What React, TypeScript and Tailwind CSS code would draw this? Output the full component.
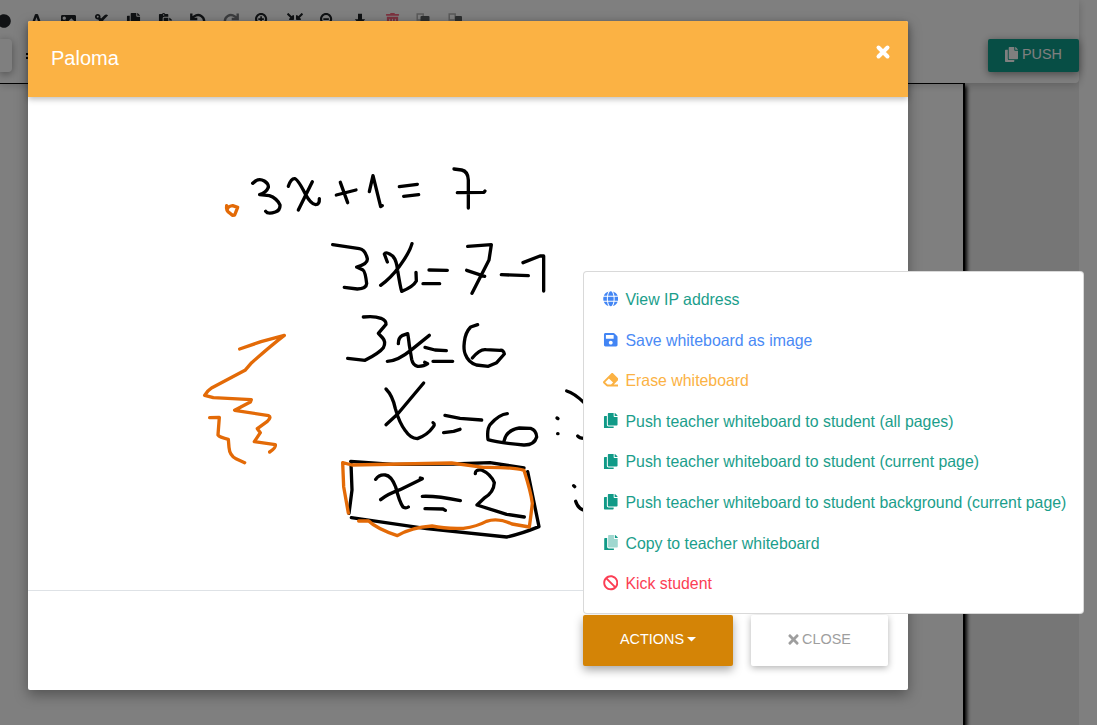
import type { ReactNode } from 'react';
import {
  FaBan,
  FaCircle,
  FaCompressArrowsAlt,
  FaCopy,
  FaCut,
  FaEraser,
  FaFont,
  FaGlobe,
  FaImage,
  FaPaste,
  FaSave,
  FaSearchMinus,
  FaSearchPlus,
  FaTimes,
  FaTrashAlt,
} from 'react-icons/fa';

const UndoIcon = () => (
  <svg viewBox="0 0 16 16" className="h-4 w-4" fill="none" stroke="currentColor" strokeWidth="2.400">
    <path d="M1.300 .5v5.500h6M1.800 5.600C4 2.500 8 1 11.200 3c3.800 2.400 4 7.800.4 10.300-2.400 1.700-5.400 1.500-7.600-.3" />
  </svg>
);

const ArrowIcon = () => (
  <svg viewBox="0 0 16 16" className="h-4 w-4" fill="currentColor">
    <path d="M6 .7h4v5.500h3.200L8 12 2.800 6.200H6z" />
  </svg>
);

const LayersIcon = ({ small = false }: { small?: boolean }) => (
  <svg viewBox="0 0 16 16" className="mr-[2px] h-4 w-4" fill="none">
    <path d="M1.200 1h6v6h-6z" stroke="#b5b5b5" strokeWidth="1.500" />
    {small ? (
      <rect x="7" y="3" width="7" height="8" rx="1" fill="#5d6062" />
    ) : (
      <rect x="4.500" y="3" width="9" height="8" rx="1" fill="#5d6062" />
    )}
  </svg>
);

const Duo = () => (
  <svg viewBox="0 0 448 512" className="h-[15.500px] w-[14px]" fill="currentColor">
    <path d="M320 448v40c0 13.255-10.745 24-24 24H24c-13.255 0-24-10.745-24-24V120c0-13.255 10.745-24 24-24h72v296c0 30.879 25.121 56 56 56h168z" />
    <path
      opacity=".4"
      d="M320 104V0H152c-13.255 0-24 10.745-24 24v368c0 13.255 10.745 24 24 24h272c13.255 0 24-10.745 24-24V128H344c-13.200 0-24-10.800-24-24z"
    />
    <path d="M440.971 72.971L375.029 7.029A24 24 0 0 0 358.059 0H352v96h96v-6.059a24 24 0 0 0-7.029-16.970z" />
  </svg>
);

const tools: ReactNode[] = [
  <FaCircle size={14} />,
  <FaFont size={15} />,
  <FaImage size={15} />,
  <FaCut size={15} />,
  <FaCopy size={15} />,
  <FaPaste size={15} />,
  <UndoIcon />,
  <span className="-scale-x-100 opacity-60">
    <UndoIcon />
  </span>,
  <FaSearchPlus size={15} />,
  <FaCompressArrowsAlt size={16} />,
  <FaSearchMinus size={15} />,
  <ArrowIcon />,
  <span className="text-[#f93154] opacity-75">
    <FaTrashAlt size={15} />
  </span>,
  <LayersIcon />,
  <LayersIcon small />,
];

const menu: { label: string; icon: ReactNode; text: string; iconColor: string }[] = [
  { label: 'View IP address', icon: <FaGlobe />, text: 'text-[#1b9e8b]', iconColor: 'text-[#4285f4]' },
  { label: 'Save whiteboard as image', icon: <FaSave />, text: 'text-[#4a8af5]', iconColor: 'text-[#4285f4]' },
  { label: 'Erase whiteboard', icon: <FaEraser />, text: 'text-[#fbb244]', iconColor: 'text-[#fbb244]' },
  { label: 'Push teacher whiteboard to student (all pages)', icon: <FaCopy />, text: 'text-[#1b9e8b]', iconColor: 'text-[#109a87]' },
  { label: 'Push teacher whiteboard to student (current page)', icon: <FaCopy />, text: 'text-[#1b9e8b]', iconColor: 'text-[#109a87]' },
  { label: 'Push teacher whiteboard to student background (current page)', icon: <FaCopy />, text: 'text-[#1b9e8b]', iconColor: 'text-[#109a87]' },
  { label: 'Copy to teacher whiteboard', icon: <Duo />, text: 'text-[#1b9e8b]', iconColor: 'text-[#109a87]' },
  { label: 'Kick student', icon: <FaBan />, text: 'text-[#fb3e54]', iconColor: 'text-[#fb3e54]' },
];

const Drawing = () => (
  <svg viewBox="28 97 880 493" className="block h-[493px] w-[880px]" fill="none" strokeLinecap="round" strokeLinejoin="round">
    <g stroke="#000" strokeWidth="10">
      <g transform="translate(190 150) scale(.33333)">
        <path d="M188 100L198 92Q210 85 223 93Q236 101 235 112Q229 127 209 134L238 137Q260 144 270 165Q271 181 256 186Q234 194 227 184" />
        <path d="M295 109Q303 85 314 86Q323 87 346 132Q362 162 377 164Q389 164 388 146M367 95L325 180" />
        <path d="M451 97L473 158M439 135L498 120M538 125L549 77L572 170L577 167" />
        <path d="M428 284L508 296Q526 299 532 326Q534 342 500 351L519 360Q526 365 530 401Q529 416 502 417L463 412" />
      </g>
      <g transform="translate(380 150) scale(.33333)">
        <path d="M58 110L112 103M71 139L116 134M222 57L245 60Q264 64 265 90L265 174M232 128L312 127L315 123" />
        <path d="M22 336L13 312Q18 303 38 318Q50 331 53 362Q61 411 65 424Q99 411 109 393L108 367M96 281Q89 307 59 348Q33 384 2 406" />
        <path d="M147 360L202 361M129 401L179 401M263 289L334 284L327 330L276 430M260 361L314 379M364 374L445 377M429 338L480 318L491 318L491 423" />
      </g>
      <g transform="translate(330 300) scale(.33333)">
        <path d="M100 51Q133 47 153 55Q169 62 168 73L145 100L158 114Q169 126 160 143Q149 158 105 181L53 175" />
        <path d="M205 131Q205 113 216 107L233 101Q235 110 238 136L245 178Q249 196 263 199Q281 200 293 191L284 187M298 106L245 149Q202 184 172 184" />
        <path d="M285 142L315 150L349 152M309 184L368 184M443 74L422 81Q406 97 403 126Q400 150 406 163Q415 187 439 195L475 199L500 188L523 162Q521 149 510 151L468 149Q450 146 427 174" />
        <path d="M168 267Q188 287 196 326Q208 369 226 392Q241 415 262 416Q293 404 306 385Q318 373 309 368M281 249L203 342L168 374" />
        <path d="M345 346L390 355L455 360M341 398L371 394L390 388M532 341Q508 343 481 373Q470 387 474 419Q502 428 581 435Q613 436 620 411Q619 390 602 385L568 384Q528 390 522 424" />
        <path d="M681 354L684 356M683 401L684 401M710 273Q732 279 762 308L790 338M743 408Q749 416 765 415" />
      </g>
      <g transform="translate(330 440) scale(.33333)">
        <path d="M62 64L190 73L370 72L480 68L582 84M63 70L66 150L57 220M64 233L290 266L530 291Q573 282 627 260L593 95" />
        <path d="M137 118Q147 103 166 105Q184 107 197 141Q208 185 219 201Q228 206 235 201M152 179Q173 162 210 149L277 116L271 114" />
        <path d="M277 169Q318 167 391 182M285 206L339 207L346 211M436 101Q435 88 455 90Q482 102 493 128Q491 158 463 174L441 195L530 223L583 231" />
        <path d="M731 137L734 140M737 184Q745 210 770 212" />
      </g>
    </g>
    <g stroke="#e36a07" strokeWidth="10">
      <path transform="translate(190 150) scale(.33333)" d="M110 167Q107 183 120 190L127 196L134 195L143 172L128 167Q113 169 112 178" />
      <path
        transform="translate(190 300) scale(.33333)"
        d="M149 147L213 125L283 106Q245 135 185 188L165 211L66 263Q52 272 44 286L70 293L184 299L181 306L134 331L236 347Q245 351 232 364L202 386L211 398L193 425L256 434Q258 444 239 456M59 353L88 352L84 405Q89 412 115 418L117 442Q119 467 138 476L164 488"
      />
      <path
        transform="translate(330 440) scale(.33333)"
        d="M86 243L116 243Q140 266 202 287Q243 262 306 258Q347 267 400 265Q442 259 469 244Q504 232 546 252L598 261Q603 226 607 190Q603 157 582 91Q549 81 460 82L365 69L66 75L38 68L41 140L55 219"
      />
    </g>
  </svg>
);

export default function App() {
  return (
    <div className="relative h-[725px] w-full overflow-hidden bg-white font-['Liberation_Sans',Arial,sans-serif]">
      <div className="flex h-full w-[1079px] flex-col bg-[#ededed]">
        <header className="relative h-[83px] shrink-0 rounded-br bg-white shadow-[0_2px_8px_rgba(0,0,0,0.2)]">
          <div className="-ml-3 flex h-[39px] items-center pt-[2px] text-[#212529]">
            {tools.map((t, i) => (
              <span key={i} className="flex w-[32.350px] shrink-0 justify-center">
                {t}
              </span>
            ))}
          </div>
          <div className="flex h-[33px] items-center">
            <div className="h-full w-3 rounded-r-sm bg-white shadow-[0_2px_8px_rgba(0,0,0,0.4)]" />
            <div className="ml-[14px] flex flex-col gap-[2px]">
              <span className="h-[2px] w-2 bg-black" />
              <span className="h-[2px] w-2 bg-black" />
            </div>
            <button className="ml-auto flex h-full w-[91px] items-center justify-center gap-1 rounded-[2px] bg-[#0f9d8a] pb-[2px] text-[14.400px] text-white shadow-[0_2px_8px_rgba(0,0,0,0.45)]">
              <FaCopy size={15} className="w-[13px]" />
              PUSH
            </button>
          </div>
        </header>
        <main className="w-[965px] flex-1 border-t border-r-2 border-black bg-white shadow-[2px_3px_4px_#000]" />
      </div>

      <div className="absolute inset-0 bg-black/50" />

      <section className="absolute top-[21px] left-[28px] flex h-[669px] w-[880px] flex-col rounded-[2px] bg-white shadow-[0_5px_14px_rgba(0,0,0,0.35)]">
        <header className="relative flex h-[76px] shrink-0 items-center justify-between rounded-t-[2px] bg-[#fbb244] pr-[17px] pl-[23px] text-white shadow-[0_2px_6px_rgba(0,0,0,0.28)]">
          <h1 className="mb-[2px] text-[20px] leading-6">Paloma</h1>
          <svg viewBox="0 0 16 16" className="mb-[14px] h-4 w-4" stroke="white" strokeWidth="4" strokeLinecap="round">
            <path d="M3.500 3.500l9 9M12.500 3.500l-9 9" />
          </svg>
        </header>
        <Drawing />
        <footer className="relative flex flex-1 items-start justify-end gap-[18px] border-t border-[#dee2e6] pt-6 pr-5 text-[14.400px]">
          <button className="flex h-[51px] w-[150px] items-center justify-center gap-[3px] rounded-[2px] bg-[#d48406] pb-px text-white shadow-[0_4px_10px_rgba(0,0,0,0.35)]">
            ACTIONS
            <svg viewBox="0 0 9 5" className="mb-[2px] h-[5px] w-[9px]" fill="white">
              <path d="M0 0h9L4.500 4.500z" />
            </svg>
          </button>
          <button className="flex h-[51px] w-[137px] items-center justify-center gap-[3px] rounded-[2px] bg-white pb-px text-[#9e9e9e] shadow-[0_2px_7px_rgba(0,0,0,0.3)]">
            <FaTimes size={15} className="mb-px w-[11px]" />
            CLOSE
          </button>
          <div className="absolute bottom-[76px] left-[555px] w-[501px] rounded border border-black/15 bg-white pt-[7.400px] pb-[8.600px]">
            {menu.map((m) => (
              <div key={m.label} className={`flex h-[40.600px] items-center gap-[7px] pl-[18.500px] text-[15.860px] whitespace-nowrap ${m.text}`}>
                <span className={`flex w-4 justify-center pb-[2px] text-[15.500px] ${m.iconColor}`}>{m.icon}</span>
                {m.label}
              </div>
            ))}
          </div>
        </footer>
      </section>
    </div>
  );
}
